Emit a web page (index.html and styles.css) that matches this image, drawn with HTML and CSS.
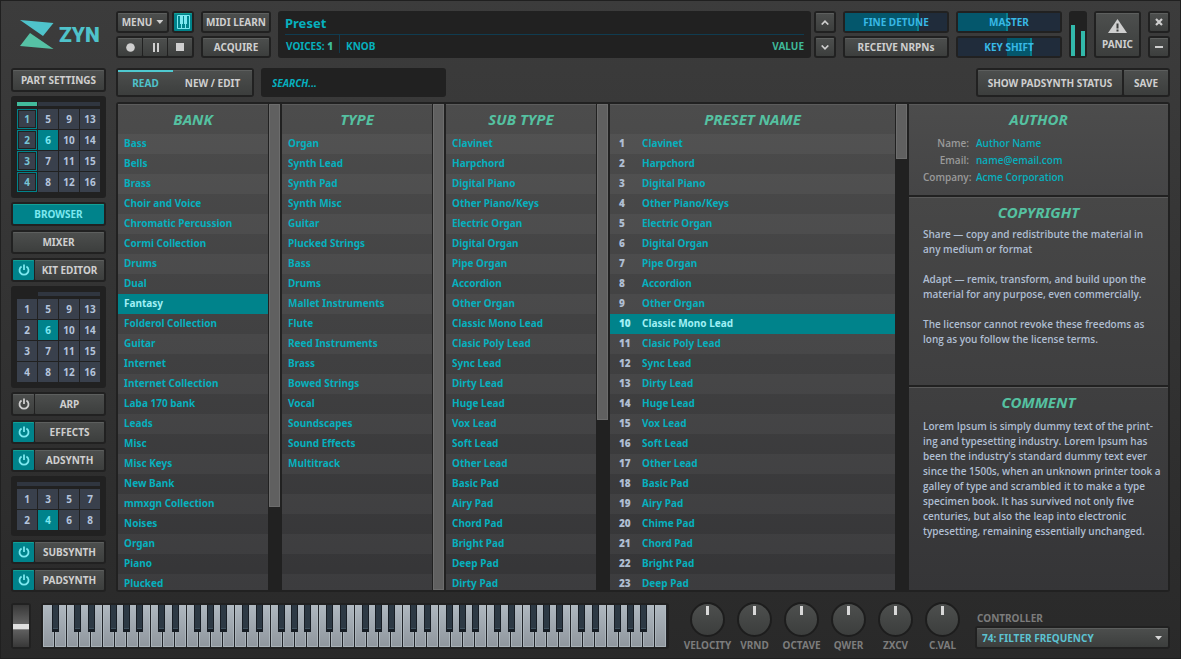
FILE: index.html
```html
<!DOCTYPE html>
<html lang="en">
<head>
<meta charset="utf-8">
<title>Zyn</title>
<link rel="stylesheet" href="styles.css">
</head>
<body>
<svg class="defs" aria-hidden="true">
  <symbol id="power" viewBox="0 0 12 12"><path d="M3.6 2.4A4.5 4.5 0 1 0 8.4 2.4" fill="none" stroke="currentColor" stroke-width="1.8"/><path d="M6 .4V6" stroke="currentColor" stroke-width="1.8"/></symbol>
</svg>

<header class="top">
  <h1 class="logo">
    <svg width="34" height="30" viewBox="0 0 34 30" aria-hidden="true"><path d="M0 0L33.500 3L23 16Z" fill="#4fc3cb"/><path d="M10 13L33.500 29L0 26Z" fill="#56c2a5"/></svg>
    <span>ZYN</span>
  </h1>
  <div class="tools">
    <div class="row menu-row">
      <div class="frame menu"><button class="btn">MENU <i class="caret"></i></button></div>
      <div class="frame keys-toggle"><button class="btn on" aria-label="Keyboard"><svg width="13" height="14" viewBox="0 0 13 14"><path d="M.5.5h12v13H.5zM4.500 9v4.500M8.500 9v4.500" fill="none" stroke="currentColor"/><path d="M3 1h3v8H3zM7 1h3v8H7z" fill="currentColor"/></svg></button></div>
    </div>
    <div class="row frame transport">
      <button class="btn" aria-label="Record"><svg width="9" height="9"><circle cx="4.500" cy="4.500" r="4.300" fill="currentColor"/></svg></button>
      <button class="btn" aria-label="Pause"><svg width="7" height="9"><path d="M1 0h2v9H1zM5 0h2v9H5z" fill="currentColor"/></svg></button>
      <button class="btn" aria-label="Stop"><svg width="8" height="8"><path d="M0 0h8v8H0z" fill="currentColor"/></svg></button>
    </div>
  </div>
  <div class="stack learn">
    <div class="frame"><button class="btn">MIDI LEARN</button></div>
    <div class="frame"><button class="btn">ACQUIRE</button></div>
  </div>
  <div class="display">
    <div class="display-name">Preset</div>
    <div class="display-info">
      <span class="voices">VOICES: <b>1</b></span><span class="knob-name">KNOB</span><span class="value">VALUE</span>
    </div>
  </div>
  <div class="stack arrows">
    <div class="frame"><button class="btn" aria-label="Previous"><svg width="8" height="5" viewBox="0 0 8 5"><path d="M.7 4.500L4 1.200L7.300 4.500" fill="none" stroke="currentColor" stroke-width="1.700"/></svg></button></div>
    <div class="frame"><button class="btn" aria-label="Next"><svg width="8" height="5" viewBox="0 0 8 5"><path d="M.7.5L4 3.800L7.300.5" fill="none" stroke="currentColor" stroke-width="1.700"/></svg></button></div>
  </div>
  <div class="stack wide">
    <div class="frame slider"><input id="detune" type="range" value="72" style="--a:0%;--b:72%"><label for="detune">FINE DETUNE</label></div>
    <div class="frame"><button class="btn">RECEIVE NRPNs</button></div>
  </div>
  <div class="stack wide">
    <div class="frame slider"><input id="master" type="range" value="48" style="--a:0%;--b:48%"><label for="master">MASTER</label></div>
    <div class="frame slider"><input id="shift" type="range" value="72" style="--a:48%;--b:72%"><label for="shift">KEY SHIFT</label></div>
  </div>
  <div class="frame meters" role="img" aria-label="Output level"><i style="height:72%"></i><i style="height:58%"></i></div>
  <div class="frame panic"><button class="btn"><svg width="19" height="14" viewBox="0 0 19 14"><path d="M9.500 0L19 14H0Z" fill="currentColor"/><path d="M9.500 4.500v5M9.500 10.500v2" stroke="#3c3e3d" stroke-width="2"/></svg>PANIC</button></div>
  <div class="stack arrows">
    <div class="frame"><button class="btn" aria-label="Close"><svg width="8" height="8"><path d="M1 1L7 7M7 1L1 7" stroke="currentColor" stroke-width="2.200"/></svg></button></div>
    <div class="frame"><button class="btn" aria-label="Minimise"><svg width="8" height="2"><path d="M0 0h8v2H0z" fill="currentColor"/></svg></button></div>
  </div>
</header>

<div class="middle">
  <nav class="side">
    <div class="frame item"><button class="btn">PART SETTINGS</button></div>
    <div class="pad">
      <div class="bar"><i class="lit"></i><i class="rest"></i></div>
      <div class="nums four">
        <button class="ring">1</button><button class="ring">2</button><button class="ring">3</button><button class="ring">4</button>
        <button>5</button><button class="sel">6</button><button>7</button><button>8</button>
        <button>9</button><button>10</button><button>11</button><button>12</button>
        <button>13</button><button>14</button><button>15</button><button>16</button>
      </div>
    </div>
    <div class="frame item"><button class="btn on">BROWSER</button></div>
    <div class="frame item"><button class="btn">MIXER</button></div>
    <div class="frame item split"><button class="btn on" aria-label="Kit power"><svg width="12" height="12"><use href="#power"/></svg></button><button class="btn">KIT EDITOR</button></div>
    <div class="pad">
      <div class="bar"><i></i><i class="rest"></i></div>
      <div class="nums four">
        <button>1</button><button>2</button><button>3</button><button>4</button>
        <button>5</button><button class="sel">6</button><button>7</button><button>8</button>
        <button>9</button><button>10</button><button>11</button><button>12</button>
        <button>13</button><button>14</button><button>15</button><button>16</button>
      </div>
    </div>
    <div class="frame item split"><button class="btn" aria-label="Arp power"><svg width="12" height="12"><use href="#power"/></svg></button><button class="btn">ARP</button></div>
    <div class="frame item split"><button class="btn on" aria-label="Effects power"><svg width="12" height="12"><use href="#power"/></svg></button><button class="btn">EFFECTS</button></div>
    <div class="frame item split"><button class="btn on" aria-label="Adsynth power"><svg width="12" height="12"><use href="#power"/></svg></button><button class="btn">ADSYNTH</button></div>
    <div class="pad">
      <div class="bar"><i class="rest"></i></div>
      <div class="nums two">
        <button>1</button><button>2</button><button>3</button><button class="sel">4</button>
        <button>5</button><button>6</button><button>7</button><button>8</button>
      </div>
    </div>
    <div class="frame item split"><button class="btn on" aria-label="Subsynth power"><svg width="12" height="12"><use href="#power"/></svg></button><button class="btn">SUBSYNTH</button></div>
    <div class="frame item split"><button class="btn on" aria-label="Padsynth power"><svg width="12" height="12"><use href="#power"/></svg></button><button class="btn">PADSYNTH</button></div>
  </nav>

  <main class="main">
    <div class="toolbar">
      <div class="frame tabs"><button class="btn active">READ</button><button class="btn">NEW / EDIT</button></div>
      <input class="search" type="search" placeholder="SEARCH..." aria-label="Search">
      <div class="frame actions"><button class="btn">SHOW PADSYNTH STATUS</button><button class="btn">SAVE</button></div>
    </div>

    <div class="browser">
      <section class="column">
        <div class="panel">
          <h2>BANK</h2>
          <ul>
            <li><button>Bass</button></li><li><button>Bells</button></li><li><button>Brass</button></li><li><button>Choir and Voice</button></li>
            <li><button>Chromatic Percussion</button></li><li><button>Cormi Collection</button></li><li><button>Drums</button></li><li><button>Dual</button></li>
            <li class="sel"><button>Fantasy</button></li><li><button>Folderol Collection</button></li><li><button>Guitar</button></li><li><button>Internet</button></li>
            <li><button>Internet Collection</button></li><li><button>Laba 170 bank</button></li><li><button>Leads</button></li><li><button>Misc</button></li>
            <li><button>Misc Keys</button></li><li><button>New Bank</button></li><li><button>mmxgn Collection</button></li><li><button>Noises</button></li>
            <li><button>Organ</button></li><li><button>Piano</button></li><li><button>Plucked</button></li>
          </ul>
        </div>
        <div class="scroll"><i style="height:83%"></i></div>
      </section>
      <section class="column">
        <div class="panel">
          <h2>TYPE</h2>
          <ul>
            <li><button>Organ</button></li><li><button>Synth Lead</button></li><li><button>Synth Pad</button></li><li><button>Synth Misc</button></li>
            <li><button>Guitar</button></li><li><button>Plucked Strings</button></li><li><button>Bass</button></li><li><button>Drums</button></li>
            <li><button>Mallet Instruments</button></li><li><button>Flute</button></li><li><button>Reed Instruments</button></li><li><button>Brass</button></li>
            <li><button>Bowed Strings</button></li><li><button>Vocal</button></li><li><button>Soundscapes</button></li><li><button>Sound Effects</button></li>
            <li><button>Multitrack</button></li><li></li><li></li><li></li><li></li><li></li><li></li>
          </ul>
        </div>
        <div class="scroll"><i style="height:100%"></i></div>
      </section>
      <section class="column">
        <div class="panel">
          <h2>SUB TYPE</h2>
          <ul>
            <li><button>Clavinet</button></li><li><button>Harpchord</button></li><li><button>Digital Piano</button></li><li><button>Other Piano/Keys</button></li>
            <li><button>Electric Organ</button></li><li><button>Digital Organ</button></li><li><button>Pipe Organ</button></li><li><button>Accordion</button></li>
            <li><button>Other Organ</button></li><li><button>Classic Mono Lead</button></li><li><button>Clasic Poly Lead</button></li><li><button>Sync Lead</button></li>
            <li><button>Dirty Lead</button></li><li><button>Huge Lead</button></li><li><button>Vox Lead</button></li><li><button>Soft Lead</button></li>
            <li><button>Other Lead</button></li><li><button>Basic Pad</button></li><li><button>Airy Pad</button></li><li><button>Chord Pad</button></li>
            <li><button>Bright Pad</button></li><li><button>Deep Pad</button></li><li><button>Dirty Pad</button></li>
          </ul>
        </div>
        <div class="scroll"><i style="height:65%"></i></div>
      </section>
      <section class="column">
        <div class="panel numbered">
          <h2>PRESET NAME</h2>
          <ul>
            <li><button><b>1</b>Clavinet</button></li><li><button><b>2</b>Harpchord</button></li><li><button><b>3</b>Digital Piano</button></li><li><button><b>4</b>Other Piano/Keys</button></li>
            <li><button><b>5</b>Electric Organ</button></li><li><button><b>6</b>Digital Organ</button></li><li><button><b>7</b>Pipe Organ</button></li><li><button><b>8</b>Accordion</button></li>
            <li><button><b>9</b>Other Organ</button></li><li class="sel"><button><b>10</b>Classic Mono Lead</button></li><li><button><b>11</b>Clasic Poly Lead</button></li><li><button><b>12</b>Sync Lead</button></li>
            <li><button><b>13</b>Dirty Lead</button></li><li><button><b>14</b>Huge Lead</button></li><li><button><b>15</b>Vox Lead</button></li><li><button><b>16</b>Soft Lead</button></li>
            <li><button><b>17</b>Other Lead</button></li><li><button><b>18</b>Basic Pad</button></li><li><button><b>19</b>Airy Pad</button></li><li><button><b>20</b>Chime Pad</button></li>
            <li><button><b>21</b>Chord Pad</button></li><li><button><b>22</b>Bright Pad</button></li><li><button><b>23</b>Deep Pad</button></li>
          </ul>
        </div>
        <div class="scroll"><i style="height:55px"></i></div>
      </section>
      <aside class="info">
        <section>
          <h2>AUTHOR</h2>
          <dl>
            <dt>Name:</dt><dd>Author Name</dd>
            <dt>Email:</dt><dd><a href="mailto:name@email.com">name@email.com</a></dd>
            <dt>Company:</dt><dd>Acme Corporation</dd>
          </dl>
        </section>
        <section class="tight">
          <h2>COPYRIGHT</h2>
          <p>Share — copy and redistribute the material in<br>any medium or format</p>
          <p>Adapt — remix, transform, and build upon the<br>material for any purpose, even commercially.</p>
          <p>The licensor cannot revoke these freedoms as<br>long as you follow the license terms.</p>
        </section>
        <section>
          <h2>COMMENT</h2>
          <p>Lorem Ipsum is simply dummy text of the print-<br>ing and typesetting industry. Lorem Ipsum has<br>been the industry's standard dummy text ever<br>since the 1500s, when an unknown printer took a<br>galley of type and scrambled it to make a type<br>specimen book. It has survived not only five<br>centuries, but also the leap into electronic<br>typesetting, remaining essentially unchanged.</p>
        </section>
      </aside>
    </div>
  </main>
</div>

<footer class="bottom">
  <div class="frame wheel"><input type="range" aria-label="Pitch wheel" value="50"></div>
  <div class="frame piano">
    <svg viewBox="0 0 624 42" preserveAspectRatio="none" role="img" aria-label="Piano keyboard">
      <defs>
        <linearGradient id="ivory" x1="0" y1="0" x2="0" y2="1"><stop offset="0" stop-color="#afb8c0"/><stop offset="1" stop-color="#8f969d"/></linearGradient>
        <pattern id="white" width="12" height="42" patternUnits="userSpaceOnUse">
          <path d="M0 0h11v42H0z" fill="url(#ivory)"/><path d="M.5 0v41.500h10V0" fill="none" stroke="#b4bec3" stroke-opacity=".7"/><path d="M11 0h1v42h-1z" fill="#22252a"/>
        </pattern>
        <g id="black"><path d="M0 0h7v27H0z" fill="#171d24"/><path d="M1 0h5v24H1z" fill="#2d3944"/><path d="M1 23h5v1H1z" fill="#3f515e"/></g>
        <g id="octave"><use href="#black" x="7"/><use href="#black" x="21"/><use href="#black" x="43"/><use href="#black" x="56"/><use href="#black" x="69"/></g>
      </defs>
      <rect width="624" height="42" fill="url(#white)"/>
      <use href="#black" x="9"/>
      <use href="#octave" x="24"/><use href="#octave" x="108"/><use href="#octave" x="192"/><use href="#octave" x="276"/><use href="#octave" x="360"/><use href="#octave" x="444"/><use href="#octave" x="528"/>
    </svg>
  </div>
  <div class="knobs">
    <label><input type="range" value="50">VELOCITY</label>
    <label><input type="range" value="50">VRND</label>
    <label><input type="range" value="50">OCTAVE</label>
    <label><input type="range" value="50">QWER</label>
    <label><input type="range" value="50">ZXCV</label>
    <label><input type="range" value="50">C.VAL</label>
  </div>
  <div class="controller">
    <label for="controller">CONTROLLER</label>
    <div class="frame"><select id="controller" class="btn"><option>74: FILTER FREQUENCY</option></select><i class="caret"></i></div>
  </div>
</footer>
</body>
</html>
```

FILE: styles.css
```css
:root {
  --dark: #212121;
  --teal: #00838b;
  --cyan: #06b0be;
  --green: #55c1a1;
  --pale: #afbed2;
  --text: #cfcfcf;
}

* { box-sizing: border-box; }

body {
  margin: 0;
  min-height: 640px;
  height: 100vh;
  padding: 10px 10px 9px;
  border: 1px solid #202020;
  display: flex;
  flex-direction: column;
  background: linear-gradient(#3c3c3c, #292929);
  color: var(--text);
  font: 700 10px/14px "Noto Sans", "Open Sans", sans-serif;
  overflow: hidden;
}

button, input, select { font: inherit; color: inherit; margin: 0; }
button { border: 0; padding: 0; background: none; white-space: nowrap; cursor: pointer; }
i { display: block; }
svg { display: block; flex: none; }
.defs { position: absolute; width: 0; height: 0; }
h1, h2, p, ul, dl, dd { margin: 0; padding: 0; }
ul { list-style: none; }

/* Shared controls */
.frame {
  display: flex;
  min-width: 0;
  padding: 2px;
  gap: 1px;
  background: var(--dark);
  border-radius: 3px;
}
.btn {
  flex: 1 1 0;
  display: flex;
  align-items: center;
  justify-content: center;
  border-radius: 1px;
  background: linear-gradient(#4d4f4e, #3c3e3d);
  box-shadow: inset 0 1px #5d5f5e;
}
.btn.on {
  background: var(--teal);
  box-shadow: inset 0 1px #14a096;
  color: #7ce8f0;
}
.caret {
  width: 7px;
  height: 4px;
  background: currentColor;
  clip-path: polygon(0 0, 100% 0, 50% 100%);
}

/* Header */
.top { display: flex; gap: 7px; height: 47px; flex: none; }
.logo {
  width: 95px;
  margin-right: 3px;
  padding-left: 9px;
  display: flex;
  align-items: center;
  gap: 5px;
  color: #4fc3cb;
  font: 900 21px/20px Roboto, sans-serif;
}
.stack, .tools { display: grid; grid-template-rows: 22px 22px; gap: 3px; }
.tools { width: 78px; }
.learn { width: 70px; }
.arrows { width: 22px; }
.wide { width: 106px; }
.menu-row { display: flex; gap: 3px; }
.menu { flex: 1; }
.menu .btn { gap: 4px; }
.keys-toggle { width: 22px; }

.display {
  flex: 1;
  margin-right: -4px;
  padding: 0 7px;
  background: var(--dark);
  border-radius: 3px;
}
.display-name {
  height: 24px;
  border-bottom: 1px solid #103c50;
  color: var(--cyan);
  font-size: 13px;
  line-height: 24px;
}
.display-info { display: flex; color: var(--cyan); line-height: 23px; }
.voices { padding: 0 6px 0 1px; height: 18px; border-right: 1px solid #103c50; }
.voices b, .value { color: #3fb99a; }
.knob-name { padding-left: 6px; }
.value { margin-left: auto; }

.slider { position: relative; }
.slider input {
  appearance: none;
  width: 100%;
  height: 18px;
  background: linear-gradient(90deg, #202c3b var(--a), #04576c var(--a) var(--b), #202c3b var(--b));
}
.slider input::-webkit-slider-thumb { appearance: none; width: 2px; height: 18px; background: #087f8c; }
.slider label {
  position: absolute;
  inset: 0;
  color: #38b9e6;
  line-height: 22px;
  text-align: center;
  pointer-events: none;
}
.meters { width: 18px; align-items: flex-end; justify-content: space-between; }
.meters i { width: 4px; background: #32b9ab; }
.panic { width: 47px; }
.panic .btn { flex-direction: column; gap: 4px; }

/* Sidebar */
.middle {
  flex: 1;
  min-height: 0;
  margin-top: 10px;
  display: grid;
  grid-template-columns: 95px minmax(0, 1fr);
  gap: 10px;
}
.side { display: flex; flex-direction: column; gap: 4px; }
.item { height: 24px; }
.split .btn:first-child { flex: 0 0 21px; }
.pad { padding: 6px; background: var(--dark); border-radius: 3px; display: grid; gap: 3px; }
.bar { display: flex; gap: 1px; height: 4px; }
.bar i { width: 20px; }
.bar .rest { flex: 1; background: #303640; }
.bar .lit { background: #42bb9c; }
.nums { display: grid; grid-auto-flow: column; grid-auto-columns: 1fr; gap: 1px; }
.four { grid-template-rows: repeat(4, 20px); }
.two { grid-template-rows: repeat(2, 20px); }
.nums button { background: #39404c; color: #b4c4dc; }
.nums .ring { border: 1px solid var(--teal); box-shadow: inset 0 0 0 1px var(--dark); color: #78c4d6; }
.nums .sel { background: var(--teal); color: #7ce8f0; }

/* Toolbar */
.main { display: flex; flex-direction: column; gap: 5px; min-height: 0; }
.toolbar { display: flex; height: 29px; gap: 7px; }
.tabs { width: 138px; gap: 0; }
.tabs .btn { flex: 79 1 0; border-radius: 0; }
.tabs .active { flex-grow: 55; color: #4fc3cb; box-shadow: inset 0 2px #4fc9d0; }
.search {
  appearance: none;
  width: 185px;
  padding: 0 11px;
  border: 0;
  border-radius: 3px;
  background: var(--dark);
  color: var(--cyan);
  font-style: italic;
}
.search::placeholder { color: var(--cyan); opacity: 1; }
.actions { margin-left: auto; width: 194px; gap: 2px; }
.actions .btn { flex-grow: 144; }
.actions .btn:last-child { flex-grow: 44; }

/* Browser */
.browser {
  flex: 1;
  min-height: 0;
  padding: 2px;
  background: var(--dark);
  border-radius: 3px;
  display: grid;
  grid-template-rows: minmax(0, 1fr);
  grid-template-columns: 164fr 164fr 164fr 299fr 259fr;
}
.column { display: flex; gap: 1px; padding-right: 2px; min-width: 0; }
.panel {
  flex: 1;
  min-width: 0;
  overflow: hidden;
  background: linear-gradient(#4c4c4c, #353537);
  box-shadow: inset 0 1px #5c5c5c;
}
h2 {
  color: var(--green);
  font-size: 15px;
  line-height: 30px;
  font-style: italic;
  text-align: center;
}
.panel li { height: 20px; }
.panel li:nth-child(odd) { background: rgb(255 255 255 / 4%); }
.panel li button {
  display: flex;
  width: 100%;
  padding: 0 6px;
  color: var(--cyan);
  line-height: 19px;
  text-align: left;
}
.panel li b { width: 23px; color: var(--pale); }
.numbered li button { padding-left: 9px; }
.panel li.sel { background: var(--teal); }
.panel li.sel button, .panel li.sel b { color: #a0f0f5; }
.scroll { width: 11px; }
.scroll i { background: #606060; border: 1px solid #6d6d6d; }

.info {
  display: grid;
  grid-template-rows: 91px 188fr 203fr;
  gap: 2px;
}
.info section {
  padding: 0 14px;
  overflow: hidden;
  background: linear-gradient(#4c4c4c, #454546);
  box-shadow: inset 0 1px #5a5a5a;
  color: var(--pale);
  line-height: 15px;
  white-space: nowrap;
}
.info section:nth-child(2) { background: linear-gradient(#474747, #3f3f40); }
.info section:nth-child(3) { background: linear-gradient(#3f3f40, #353537); }
.info p, .info dl { font-family: "Open Sans", "Noto Sans", sans-serif; font-weight: 600; }
.info p { margin-bottom: 15px; }
.info h2 + p { padding-top: 2px; }
.info .tight h2 + p { padding-top: 0; }
dl { display: grid; grid-template-columns: 46px 1fr; column-gap: 7px; padding-top: 1px; line-height: 17px; }
dt { color: #9a9a9a; text-align: right; }
dd, dd a { color: var(--cyan); text-decoration: none; }

/* Footer */
.bottom { display: flex; height: 46px; margin-top: 11px; flex: none; }
.wheel { width: 20px; }
.wheel input {
  appearance: none;
  writing-mode: vertical-lr;
  width: 16px;
  height: 42px;
  background: linear-gradient(#383838, #686868 50%, #383838);
}
.wheel input::-webkit-slider-thumb { appearance: none; width: 16px; height: 5px; background: #e0e0e0; box-shadow: 0 1px #888; }
.piano { flex: 1; margin-left: 10px; }
.piano svg { width: 100%; height: 42px; }
.knobs { display: flex; margin-left: 15px; }
.knobs label {
  width: 47px;
  display: flex;
  flex-direction: column;
  align-items: center;
  gap: 1px;
  color: #7c7c7c;
}
.knobs input {
  appearance: none;
  flex: none;
  width: 35px;
  height: 35px;
  margin-top: -1px;
  border: 2px solid #1d1d1d;
  border-radius: 50%;
  background: linear-gradient(#4d4f4e, #3c3e3d);
}
.knobs input::-webkit-slider-runnable-track { height: 31px; }
.knobs input::-webkit-slider-thumb { appearance: none; width: 3px; height: 9px; margin-top: 2px; background: #d8d8d8; }
.controller { width: 195px; margin-left: 9px; padding-top: 8px; color: #7c7c7c; display: flex; flex-direction: column; gap: 1px; }
.controller label { padding-left: 2px; }
.controller .frame { position: relative; height: 24px; }
.controller select { appearance: none; border: 0; padding: 0 5px; color: #5cc3d2; }
.controller .caret { position: absolute; right: 8px; top: 10px; color: #d8d8d8; pointer-events: none; }
```
